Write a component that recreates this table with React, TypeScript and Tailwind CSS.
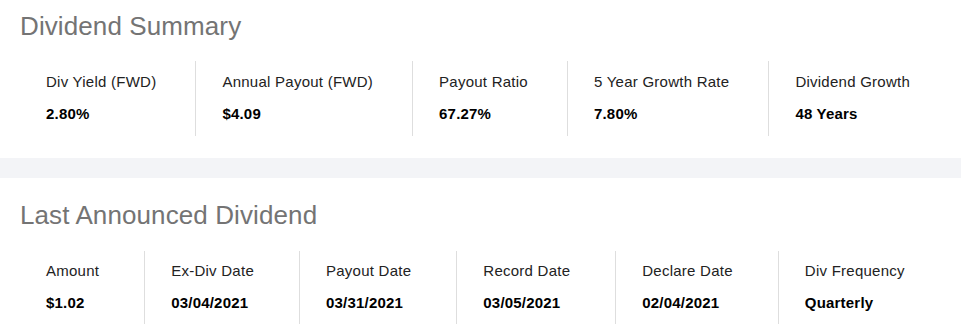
import React from "react";

type Item = { label: string; value: string };

const summary: Item[] = [
  { label: "Div Yield (FWD)", value: "2.80%" },
  { label: "Annual Payout (FWD)", value: "$4.09" },
  { label: "Payout Ratio", value: "67.27%" },
  { label: "5 Year Growth Rate", value: "7.80%" },
  { label: "Dividend Growth", value: "48 Years" },
];

const last: Item[] = [
  { label: "Amount", value: "$1.02" },
  { label: "Ex-Div Date", value: "03/04/2021" },
  { label: "Payout Date", value: "03/31/2021" },
  { label: "Record Date", value: "03/05/2021" },
  { label: "Declare Date", value: "02/04/2021" },
  { label: "Div Frequency", value: "Quarterly" },
];

function Row({ items, pad }: { items: Item[]; pad: "a" | "b" }) {
  return (
    <div className="flex">
      {items.map((it, i) => (
        <div
          key={it.label}
          className={
            (pad === "a"
              ? "pt-[11px] pb-[12px] pr-[39px] "
              : "pt-[10px] pb-[11px] pr-[45px] ") +
            "flex flex-col gap-[12px] pl-[26px] " +
            (i < items.length - 1 ? "border-r border-[#dedede]" : "")
          }
        >
          <div className="text-[15px] leading-[20px] tracking-[0.25px] text-[#222] whitespace-nowrap">
            {it.label}
          </div>
          <div className="text-[15px] leading-[20px] tracking-[0.2px] font-bold text-black whitespace-nowrap">
            {it.value}
          </div>
        </div>
      ))}
    </div>
  );
}

export default function App() {
  return (
    <div
      className="w-[961px] h-[334px] overflow-hidden bg-white"
      style={{ fontFamily: '"Liberation Sans", Arial, sans-serif' }}
    >
      <section className="px-5 pt-[11px] pb-[22px]">
        <h2 className="text-[26px] leading-[30px] tracking-[0.1px] text-[#747474] font-normal">
          Dividend Summary
        </h2>
        <div className="mt-[20px]">
          <Row items={summary} pad="a" />
        </div>
      </section>
      <div className="h-[20px] bg-[#f3f4f7]" />
      <section className="px-5 pt-[22px]">
        <h2 className="text-[26px] leading-[30px] tracking-[0.1px] text-[#747474] font-normal">
          Last Announced Dividend
        </h2>
        <div className="mt-[21px]">
          <Row items={last} pad="b" />
        </div>
      </section>
    </div>
  );
}
